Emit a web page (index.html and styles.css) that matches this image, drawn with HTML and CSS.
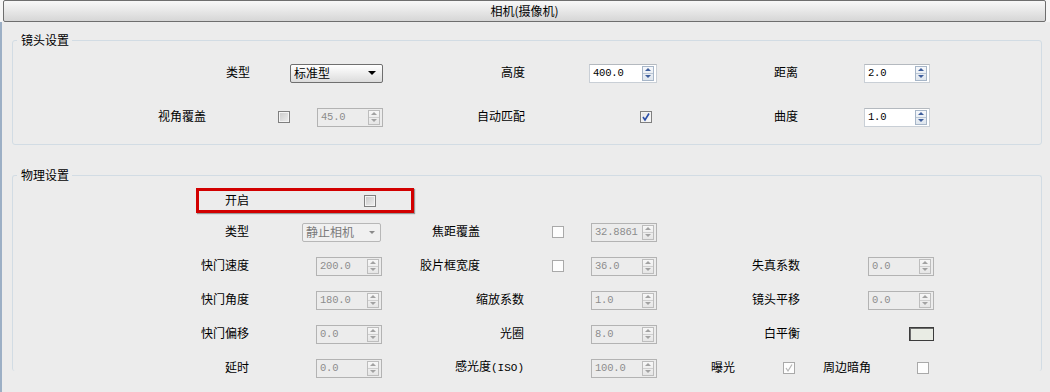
FILE: index.html
```html
<!DOCTYPE html>
<html lang="zh-CN">
<head>
    <meta charset="UTF-8">
    <title>相机(摄像机)</title>
    <link rel="stylesheet" href="styles.css">
</head>
<body>
    <div class="titlebar">
        <div class="title">相机(摄像机)</div>
    </div>
    <div class="panel">
        <fieldset class="group lens">
            <legend>镜头设置</legend>
            <div class="lens-grid">
                <span class="lbl g2">类型</span>
                <div class="combo g4"><span>标准型</span><i class="arrow"></i></div>
                <span class="lbl g5">高度</span>
                <div class="spin wide g7"><span class="val">400.0</span><span class="btns"><i></i><i class="dn"></i></span></div>
                <span class="lbl g8">距离</span>
                <div class="spin g10"><span class="val">2.0</span><span class="btns"><i></i><i class="dn"></i></span></div>

                <span class="lbl g1">视角覆盖</span>
                <span class="check g3"></span>
                <div class="spin off g4 end"><span class="val">45.0</span><span class="btns"><i></i><i class="dn"></i></span></div>
                <span class="lbl g5">自动匹配</span>
                <span class="check on g7 end pad5"><svg width="10" height="10" viewBox="0 0 10 10"><path d="M2 5 L4 8 L8 1.5" fill="none" stroke="#2c4fa8" stroke-width="1.6"/></svg></span>
                <span class="lbl g8">曲度</span>
                <div class="spin g10"><span class="val">1.0</span><span class="btns"><i></i><i class="dn"></i></span></div>
            </div>
        </fieldset>

        <fieldset class="group phys">
            <legend>物理设置</legend>
            <div class="highlight">
                <span class="lbl hl-lbl">开启</span>
                <span class="check hl-check"></span>
            </div>
            <div class="phys-grid">
                <span class="lbl p2">类型</span>
                <div class="combo off p4"><span>静止相机</span><i class="arrow"></i></div>
                <span class="lbl p6">焦距覆盖</span>
                <span class="check off p8"></span>
                <div class="spin off p9"><span class="val">32.8861</span><span class="btns"><i></i><i class="dn"></i></span></div>

                <span class="lbl p2">快门速度</span>
                <div class="spin off p4 end"><span class="val">200.0</span><span class="btns"><i></i><i class="dn"></i></span></div>
                <span class="lbl p6">胶片框宽度</span>
                <span class="check off p8"></span>
                <div class="spin off p9"><span class="val">36.0</span><span class="btns"><i></i><i class="dn"></i></span></div>
                <span class="lbl p13">失真系数</span>
                <div class="spin off p16"><span class="val">0.0</span><span class="btns"><i></i><i class="dn"></i></span></div>

                <span class="lbl p2">快门角度</span>
                <div class="spin off p4 end"><span class="val">180.0</span><span class="btns"><i></i><i class="dn"></i></span></div>
                <span class="lbl p7">缩放系数</span>
                <div class="spin off p9"><span class="val">1.0</span><span class="btns"><i></i><i class="dn"></i></span></div>
                <span class="lbl p13">镜头平移</span>
                <div class="spin off p16"><span class="val">0.0</span><span class="btns"><i></i><i class="dn"></i></span></div>

                <span class="lbl p2">快门偏移</span>
                <div class="spin off p4 end"><span class="val">0.0</span><span class="btns"><i></i><i class="dn"></i></span></div>
                <span class="lbl p7">光圈</span>
                <div class="spin off p9"><span class="val">8.0</span><span class="btns"><i></i><i class="dn"></i></span></div>
                <span class="lbl p13">白平衡</span>
                <span class="swatch p16"></span>

                <span class="lbl p2">延时</span>
                <div class="spin off p4 end"><span class="val">0.0</span><span class="btns"><i></i><i class="dn"></i></span></div>
                <span class="lbl p7">感光度<span class="latin">(ISO)</span></span>
                <div class="spin off p9"><span class="val">100.0</span><span class="btns"><i></i><i class="dn"></i></span></div>
                <span class="lbl p11">曝光</span>
                <span class="check off p12 pad5"><svg width="10" height="10" viewBox="0 0 10 10"><path d="M2 5 L4 8 L8 1.5" fill="none" stroke="#b4b4b4" stroke-width="1.2"/></svg></span>
                <span class="lbl p15">周边暗角</span>
                <span class="check off p16 pad5"></span>
            </div>
        </fieldset>
    </div>
</body>
</html>
```
FILE: styles.css
```css
body {
    margin: 0;
    background-color: #ececec;
    font-family: "Noto Sans CJK SC", "Liberation Sans", sans-serif;
    font-size: 12px;
    color: #000;
    height: 392px;
    overflow: hidden;
}
.titlebar {
    padding: 0 4px 0 3px;
    background-color: #f6f6f6;
}
.title {
    height: 20px;
    line-height: 20px;
    text-align: center;
    border: 1px solid #6e6e6e;
    border-radius: 2px;
    background: linear-gradient(#f8f8f8, #e9e9e9 45%, #d6d6d6);
}
.panel {
    border-left: 2px solid #9cafc5;
    height: 370px;
    overflow: hidden;
}
.group {
    margin: 0 8px 0 10px;
    padding: 0;
    border: 1px solid #d2dce4;
    border-radius: 3px;
    min-width: 0;
}
.group legend {
    margin-left: 4px;
    padding: 0 3px 0 4px;
    line-height: 14px;
}
.lens {
    margin-top: 11px;
    padding: 16px 0 17px;
}
.phys {
    margin-top: 23px;
    padding: 6px 0 0;
    border-bottom: 0;
    height: 196px;
}

.lbl {
    white-space: nowrap;
    justify-self: end;
    align-self: center;
    line-height: 14px;
    margin-bottom: 2px;
}
.latin {
    font-family: "Liberation Mono", monospace;
    font-size: 11px;
}
.end {
    justify-self: end;
}
.pad5 {
    justify-self: end;
    margin-right: 5px;
}

/* grids */
.lens-grid {
    display: grid;
    grid-template-columns: 193px 44px 40px 93px 142px 64px 68px 141px 66px 66px 1fr;
    grid-auto-rows: 20px;
    row-gap: 24px;
    align-items: center;
}
.g1 { grid-column: 1; }
.g2 { grid-column: 2; }
.g3 { grid-column: 3; justify-self: end; }
.g4 { grid-column: 4; }
.g5 { grid-column: 5; }
.g7 { grid-column: 7; }
.g8 { grid-column: 8; }
.g10 { grid-column: 10; }

.phys-grid {
    display: grid;
    grid-template-columns: 183px 53px 53px 80px 32px 66px 44px 67px 66px 54px 24px 21px 44px 23px 45px 66px 1fr;
    grid-auto-rows: 20px;
    row-gap: 14px;
    align-items: center;
    margin-top: 9px;
}
.p2 { grid-column: 2; }
.p4 { grid-column: 4; }
.p6 { grid-column: 6; }
.p7 { grid-column: 6 / 8; }
.p8 { grid-column: 8; justify-self: center; }
.p9 { grid-column: 9; }
.p11 { grid-column: 11; }
.p12 { grid-column: 12 / 14; }
.p13 { grid-column: 11 / 14; }
.p15 { grid-column: 15; justify-self: start; }
.p16 { grid-column: 16; justify-self: end; }
.p16.pad5 { margin-right: 5px; }

/* red highlight */
.highlight {
    margin-left: 183px;
    width: 212px;
    height: 19px;
    border: 3px solid #d20000;
    box-shadow: 1px 1px 1px rgba(0, 0, 0, 0.35);
    display: flex;
    align-items: center;
}
.hl-lbl {
    width: 50px;
    text-align: right;
}
.hl-check {
    margin-left: 115px;
}

/* combo box */
.combo {
    box-sizing: border-box;
    height: 19px;
    width: 93px;
    border: 1px solid #6f6f6f;
    border-radius: 2px;
    background: linear-gradient(#ffffff, #f0f0f0 45%, #dcdcdc);
    display: flex;
    align-items: center;
    justify-content: space-between;
    padding: 0 6px 0 3px;
    line-height: 14px;
}
.combo .arrow {
    width: 0;
    height: 0;
    border-left: 4px solid transparent;
    border-right: 4px solid transparent;
    border-top: 4px solid #000;
}
.combo.off {
    width: 79px;
    border-color: #b7b7b7;
    background: #f0f0f0;
    color: #7a7a7a;
    padding-right: 5px;
}
.combo.off .arrow {
    border-top-color: #8a8a8a;
    border-left-width: 3px;
    border-right-width: 3px;
    border-top-width: 3px;
}

/* spin box */
.spin {
    box-sizing: border-box;
    width: 66px;
    height: 19px;
    border: 1px solid #c9cfd6;
    border-top-color: #b4b9bf;
    background-color: #fff;
    display: flex;
    align-items: center;
    justify-content: space-between;
    padding: 0 2px 0 3px;
}
.spin.wide {
    width: 68px;
}
.spin .val {
    font-family: "Liberation Mono", monospace;
    font-size: 10.5px;
    line-height: 12px;
    letter-spacing: -0.2px;
}
.spin .btns {
    box-sizing: border-box;
    width: 12px;
    height: 15px;
    border: 1px solid #a7b6c8;
    background: linear-gradient(#f6f8fb, #dfe6ee);
    display: flex;
    flex-direction: column;
}
.spin .btns i {
    flex: 1;
    display: flex;
    align-items: center;
    justify-content: center;
}
.spin .btns i + i {
    border-top: 1px solid #b9c5d3;
}
.spin .btns i::before {
    content: "";
    border-left: 3px solid transparent;
    border-right: 3px solid transparent;
    border-bottom: 3px solid #3e5e9c;
}
.spin .btns i.dn::before {
    border-bottom: 0;
    border-top: 3px solid #3e5e9c;
}
.spin.off {
    background-color: #ececec;
    border-color: #b3b3b3;
    color: #8c8c8c;
}
.spin.off .btns {
    border-color: #bdbdbd;
    background: linear-gradient(#f7f7f7, #e6e6e6);
}
.spin.off .btns i + i {
    border-top-color: #cfcfcf;
}
.spin.off .btns i::before {
    border-bottom-color: #a2a2a2;
}
.spin.off .btns i.dn::before {
    border-top-color: #a2a2a2;
}

/* check box */
.check {
    box-sizing: border-box;
    width: 12px;
    height: 12px;
    border: 1px solid #7f7f7f;
    background: linear-gradient(135deg, #c9c9c9, #efefef);
    box-shadow: inset 0 0 0 1px #f4f4f4;
    display: flex;
    align-items: center;
    justify-content: center;
}
.check.on {
    background: linear-gradient(135deg, #e4e4e4, #fafafa);
}
.check.off {
    border-color: #a9a9a9;
    background: #fdfdfd;
    box-shadow: none;
}
.check svg {
    display: block;
}

.swatch {
    box-sizing: border-box;
    width: 25px;
    height: 14px;
    border: 1px solid #3c3c3c;
    background-color: #e9ece4;
    box-shadow: inset 1px 1px 0 #6b6b6b;
}
```
